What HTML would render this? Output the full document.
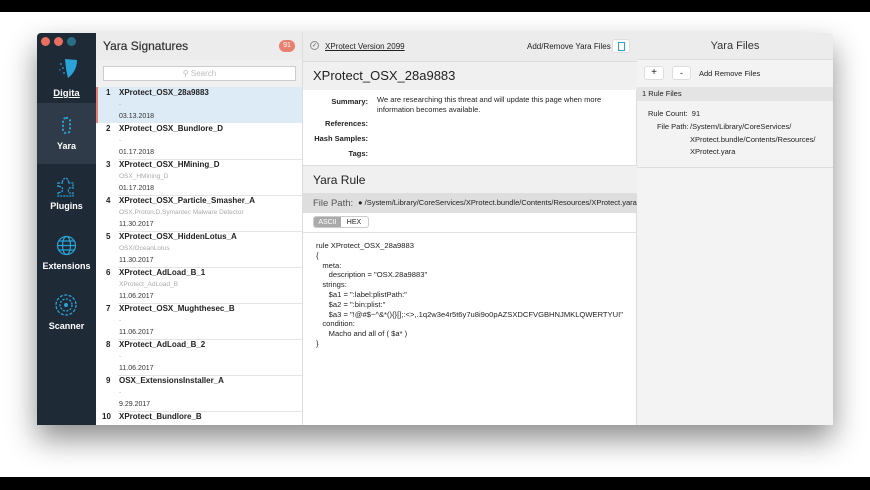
<!DOCTYPE html>
<html><head><style>
*{margin:0;padding:0;box-sizing:border-box}
body{width:870px;height:490px;background:#fff;position:relative;overflow:hidden;font-family:"Liberation Sans",sans-serif;color:#222}
.bar{position:absolute;left:0;width:870px;background:#000}
.win{position:absolute;left:37px;top:33px;width:796px;height:392px;background:#fff;box-shadow:0 14px 30px rgba(0,0,0,.45);overflow:hidden;border-radius:4px 4px 0 0}
.abs{position:absolute}
.side{left:0;top:0;width:59px;height:392px;background:#1f2a37}
.dot{position:absolute;top:4px;width:9px;height:9px;border-radius:50%}
.slab{position:absolute;width:59px;text-align:center;color:#fff;font-size:9px;font-weight:bold}
.list{left:59px;top:0;width:207px;height:392px;background:#fff;border-right:1px solid #ddd}
.item{position:absolute;left:0;width:206px;height:36px}
.item .n{position:absolute;left:10px;top:0;font-size:8px;font-weight:bold}
.item .t{position:absolute;left:23px;top:0;font-size:8px;font-weight:bold}
.item .s{position:absolute;left:23px;top:13px;font-size:6.5px;color:#aaa}
.item .d{position:absolute;left:23px;top:25px;font-size:7px;color:#333}
.item .ln{position:absolute;left:22px;right:0;bottom:0;border-bottom:1px solid #e4e4e4}
.mid{left:266px;top:0;width:334px;height:392px;background:#fff;border-right:1px solid #ddd}
.right{left:600px;top:0;width:196px;height:392px;background:#f3f3f3}
.lbl{position:absolute;right:268px;font-size:7.5px;font-weight:bold;text-align:right}
.code{position:absolute;left:13px;top:208px;font-size:7.6px;line-height:9.8px;color:#222;white-space:pre}
</style></head><body>
<div class="bar" style="top:0;height:12px"></div>
<div class="bar" style="top:477px;height:13px"></div>
<div class="win">
 <div class="abs side">
  <div class="dot" style="left:4px;background:#e8705f"></div>
  <div class="dot" style="left:17px;background:#e8705f"></div>
  <div class="dot" style="left:30px;background:#2a6f86"></div>
  <svg class="abs" style="left:20px;top:24px" width="22" height="22" viewBox="0 0 22 22"><path d="M8 2 L20 3 Q20 14 11 21 Q9 14 8 2Z" fill="#2aa3d9"/><g fill="#2aa3d9" opacity=".6"><rect x="3" y="6" width="2" height="2"/><rect x="5" y="10" width="2" height="2"/><rect x="2" y="12" width="1.5" height="1.5"/><rect x="6" y="15" width="2" height="2"/></g></svg>
  <div class="slab" style="top:55px;text-decoration:underline;font-size:9.5px">Digita</div>
  <div class="abs" style="left:0;top:70px;width:59px;height:61px;background:#2f3b48"></div>
  <div class="abs" style="left:25px;top:84px;width:9px;height:17px;border:2px dotted #2aa3d9;border-radius:4px"></div>
  <div class="slab" style="top:108px">Yara</div>
  <svg class="abs" style="left:18px;top:143px" width="22" height="22" viewBox="0 0 22 22"><path d="M3 7h5a3 3 0 1 1 5 0h5v5a3 3 0 1 0 0 5v3H3v-4a3 3 0 1 0 0-5z" fill="none" stroke="#2aa3d9" stroke-width="1.3" stroke-dasharray="2 1"/></svg>
  <div class="slab" style="top:168px">Plugins</div>
  <svg class="abs" style="left:19px;top:202px" width="21" height="21" viewBox="0 0 21 21"><g fill="none" stroke="#2aa3d9" stroke-width="1.2"><circle cx="10.5" cy="10.5" r="9"/><ellipse cx="10.5" cy="10.5" rx="4" ry="9"/><path d="M1.5 10.5h18M3 6h15M3 15h15"/></g></svg>
  <div class="slab" style="top:228px">Extensions</div>
  <svg class="abs" style="left:18px;top:261px" width="22" height="22" viewBox="0 0 22 22"><g fill="none" stroke="#2aa3d9" stroke-width="1.3"><circle cx="11" cy="11" r="10" stroke-dasharray="3 1.5"/><circle cx="11" cy="11" r="6" stroke-dasharray="2 1.5"/></g><circle cx="11" cy="11" r="2" fill="#2aa3d9"/></svg>
  <div class="slab" style="top:288px">Scanner</div>
 </div>
 <div class="abs list">
  <div class="abs" style="left:0;top:0;width:206px;height:27px;background:#ececec"></div>
  <div class="abs" style="left:7px;top:6px;font-size:12px;color:#333;-webkit-text-stroke:0.2px #333">Yara Signatures</div>
  <div class="abs" style="left:183px;top:7px;width:16px;height:12px;border-radius:6px;background:#e8806f;color:#fff;font-size:7px;text-align:center;line-height:12px">91</div>
  <div class="abs" style="left:0;top:27px;width:206px;height:27px;background:#f0f0f0"></div>
  <div class="abs" style="left:7px;top:33px;width:193px;height:15px;background:#fff;border:1px solid #ccc;font-size:8px;color:#bbb;text-align:center;line-height:13px">&#9906; Search</div>
  <div class="abs" style="left:0;top:54px;width:206px;height:36px;background:#dcebf6"></div>
  <div class="abs" style="left:0;top:54px;width:2px;height:36px;background:#e8806f"></div>
  <div class="item" style="top:55px"><span class="n">1</span><span class="t">XProtect_OSX_28a9883</span><span class="s">-</span><span class="d">03.13.2018</span></div>
  <div class="item" style="top:91px"><span class="n">2</span><span class="t">XProtect_OSX_Bundlore_D</span><span class="s">-</span><span class="d">01.17.2018</span><i class="ln"></i></div>
  <div class="item" style="top:127px"><span class="n">3</span><span class="t">XProtect_OSX_HMining_D</span><span class="s">OSX_HMining_D</span><span class="d">01.17.2018</span><i class="ln"></i></div>
  <div class="item" style="top:163px"><span class="n">4</span><span class="t">XProtect_OSX_Particle_Smasher_A</span><span class="s">OSX.Proton.D,Symantec Malware Detector</span><span class="d">11.30.2017</span><i class="ln"></i></div>
  <div class="item" style="top:199px"><span class="n">5</span><span class="t">XProtect_OSX_HiddenLotus_A</span><span class="s">OSX/OceanLotus</span><span class="d">11.30.2017</span><i class="ln"></i></div>
  <div class="item" style="top:235px"><span class="n">6</span><span class="t">XProtect_AdLoad_B_1</span><span class="s">XProtect_AdLoad_B</span><span class="d">11.06.2017</span><i class="ln"></i></div>
  <div class="item" style="top:271px"><span class="n">7</span><span class="t">XProtect_OSX_Mughthesec_B</span><span class="s">-</span><span class="d">11.06.2017</span><i class="ln"></i></div>
  <div class="item" style="top:307px"><span class="n">8</span><span class="t">XProtect_AdLoad_B_2</span><span class="s">-</span><span class="d">11.06.2017</span><i class="ln"></i></div>
  <div class="item" style="top:343px"><span class="n">9</span><span class="t">OSX_ExtensionsInstaller_A</span><span class="s">-</span><span class="d">9.29.2017</span><i class="ln"></i></div>
  <div class="item" style="top:379px"><span class="n" style="left:6px">10</span><span class="t">XProtect_Bundlore_B</span></div>
 </div>
 <div class="abs mid">
  <div class="abs" style="left:0;top:0;width:334px;height:29px;background:#ececec;border-bottom:1px solid #ddd"></div>
  <div class="abs" style="left:7px;top:8px;width:9px;height:9px;border:1px solid #888;border-radius:50%;font-size:6px;text-align:center;line-height:8px;color:#555">&#10003;</div>
  <div class="abs" style="left:22px;top:9px;font-size:8px;text-decoration:underline">XProtect Version 2099</div>
  <div class="abs" style="left:224px;top:9px;font-size:8px">Add/Remove Yara Files</div>
  <div class="abs" style="left:309px;top:6px;width:18px;height:14px;background:#fff;border:1px solid #ddd;border-radius:3px"><div style="margin:2px 5px;width:7px;height:9px;border:1.5px solid #2aa3d9"></div></div>
  <div class="abs" style="left:0;top:29px;width:334px;height:28px;background:#f0f0f0"></div>
  <div class="abs" style="left:10px;top:35px;font-size:13px">XProtect_OSX_28a9883</div>
  <div class="lbl" style="top:64px">Summary:</div>
  <div class="abs" style="left:74px;top:62px;width:240px;font-size:7.5px;line-height:10px">We are researching this threat and will update this page when more information becomes available.</div>
  <div class="lbl" style="top:86px">References:</div>
  <div class="lbl" style="top:101px">Hash Samples:</div>
  <div class="lbl" style="top:116px">Tags:</div>
  <div class="abs" style="left:0;top:132px;width:334px;height:28px;background:#f0f0f0;border-top:1px solid #ddd"></div>
  <div class="abs" style="left:10px;top:140px;font-size:12px">Yara Rule</div>
  <div class="abs" style="left:0;top:160px;width:334px;height:20px;background:#dedede"></div>
  <div class="abs" style="left:10px;top:165px;font-size:9.5px;color:#555">File Path:</div>
  <div class="abs" style="left:55px;top:165px;font-size:7.5px;white-space:nowrap">&#9679; /System/Library/CoreServices/XProtect.bundle/Contents/Resources/XProtect.yara</div>
  <div class="abs" style="left:10px;top:183px;width:56px;height:12px;border:1px solid #ccc;border-radius:3px;background:#fff;font-size:7px;overflow:hidden"><span style="display:inline-block;width:27px;height:12px;background:#aaa;color:#fff;text-align:center;line-height:11px">ASCII</span><span style="display:inline-block;width:26px;text-align:center;line-height:11px">HEX</span></div>
  <div class="abs" style="left:0;top:199px;width:334px;border-top:1px solid #e2e2e2"></div>
<div class="code">rule XProtect_OSX_28a9883
{
   meta:
      description = "OSX.28a9883"
   strings:
      $a1 = ":label:plistPath:"
      $a2 = ":bin:plist:"
      $a3 = "!@#$~^&amp;*(){}[];:&lt;&gt;,.1q2w3e4r5t6y7u8i9o0pAZSXDCFVGBHNJMKLQWERTYUI"
   condition:
      Macho and all of ( $a* )
}</div>
 </div>
 <div class="abs right">
  <div class="abs" style="left:0;top:0;width:196px;height:27px;background:#ececec;border-bottom:1px solid #ddd;text-align:center;font-size:11px;line-height:27px;color:#333">Yara Files</div>
  <div class="abs" style="left:7px;top:33px;width:20px;height:14px;background:#fff;border:1px solid #ddd;border-radius:3px;font-size:10px;text-align:center;line-height:12px">+</div>
  <div class="abs" style="left:35px;top:33px;width:19px;height:14px;background:#fff;border:1px solid #ddd;border-radius:3px;font-size:9px;text-align:center;line-height:12px">-</div>
  <div class="abs" style="left:62px;top:36px;font-size:7.5px">Add Remove Files</div>
  <div class="abs" style="left:0;top:54px;width:196px;height:14px;background:#e4e4e4;font-size:7.5px;line-height:14px;padding-left:5px">1 Rule Files</div>
  <div class="abs" style="left:11px;top:75px;font-size:7.5px;line-height:12.5px">Rule Count:&nbsp; 91</div>
  <div class="abs" style="left:20px;top:88px;font-size:7.5px;line-height:12px">File Path:</div>
  <div class="abs" style="left:53px;top:88px;font-size:7.5px;line-height:12.5px">/System/Library/CoreServices/<br>XProtect.bundle/Contents/Resources/<br>XProtect.yara</div>
  <div class="abs" style="left:0;top:134px;width:196px;border-top:1px solid #ddd"></div>
 </div>
</div>
</body></html>
